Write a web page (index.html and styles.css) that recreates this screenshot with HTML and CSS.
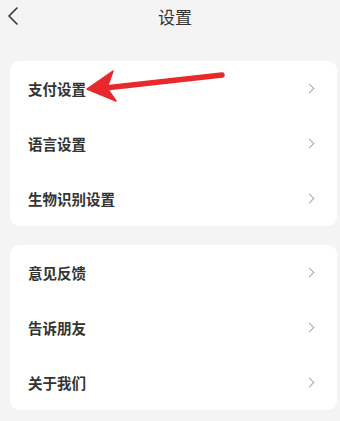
FILE: index.html
```html
<!DOCTYPE html>
<html lang="zh">
<head>
<meta charset="utf-8">
<link rel="stylesheet" href="styles.css">
</head>
<body>
<div class="page">
  <header class="nav">
    <svg class="back" width="12" height="18" viewBox="0 0 12 18"><path d="M10 1 L2 9 L10 17" fill="none" stroke="#333" stroke-width="1.6" stroke-linecap="round" stroke-linejoin="round"/></svg>
    <h1 class="title">设置</h1>
  </header>
  <section class="card">
    <div class="row"><span class="label">支付设置</span><span class="chev"></span></div>
    <div class="row"><span class="label">语言设置</span><span class="chev"></span></div>
    <div class="row"><span class="label">生物识别设置</span><span class="chev"></span></div>
  </section>
  <section class="card">
    <div class="row"><span class="label">意见反馈</span><span class="chev"></span></div>
    <div class="row"><span class="label">告诉朋友</span><span class="chev"></span></div>
    <div class="row"><span class="label">关于我们</span><span class="chev"></span></div>
  </section>
  <svg class="arrow" width="340" height="421" viewBox="0 0 340 421">
    <path d="M222 75 L105 88" stroke="#e8282b" stroke-width="5.5" stroke-linecap="round" fill="none"/>
    <path d="M87 89 L113 71 L107 88 L116 101 Z" fill="#e8282b" stroke="#e8282b" stroke-width="1.5" stroke-linejoin="round"/>
  </svg>
</div>
</body>
</html>
```
FILE: styles.css
```css
html, body {
  margin: 0;
  padding: 0;
  background: #f4f4f4;
}
body {
  font-family: "Noto Sans CJK SC", "Noto Sans", sans-serif;
  color: #333;
}
.page {
  position: relative;
  width: 340px;
  height: 421px;
  overflow: hidden;
}
.nav {
  position: relative;
  height: 36px;
  display: flex;
  align-items: center;
  justify-content: center;
}
.back {
  position: absolute;
  left: 7px;
  top: 7px;
}
.title {
  margin: 0;
  font-size: 17px;
  font-weight: 400;
  color: #333;
  line-height: 20px;
  position: relative;
  top: -1px;
  left: 5px;
}
.card {
  margin: 25px 3px 0 10px;
  background: #fff;
  border-radius: 9px;
  padding: 0;
}
.card + .card {
  margin-top: 19px;
}
.row {
  height: 55px;
  display: flex;
  align-items: center;
  justify-content: space-between;
  padding: 0 24px 0 18px;
}
.label {
  font-size: 14.5px;
  font-weight: 600;
  color: #333;
}
.chev {
  width: 6px;
  height: 6px;
  border-top: 1.3px solid #a8a8a8;
  border-right: 1.3px solid #a8a8a8;
  transform: rotate(45deg);
}
.arrow {
  position: absolute;
  left: 0;
  top: 0;
  pointer-events: none;
}
```
